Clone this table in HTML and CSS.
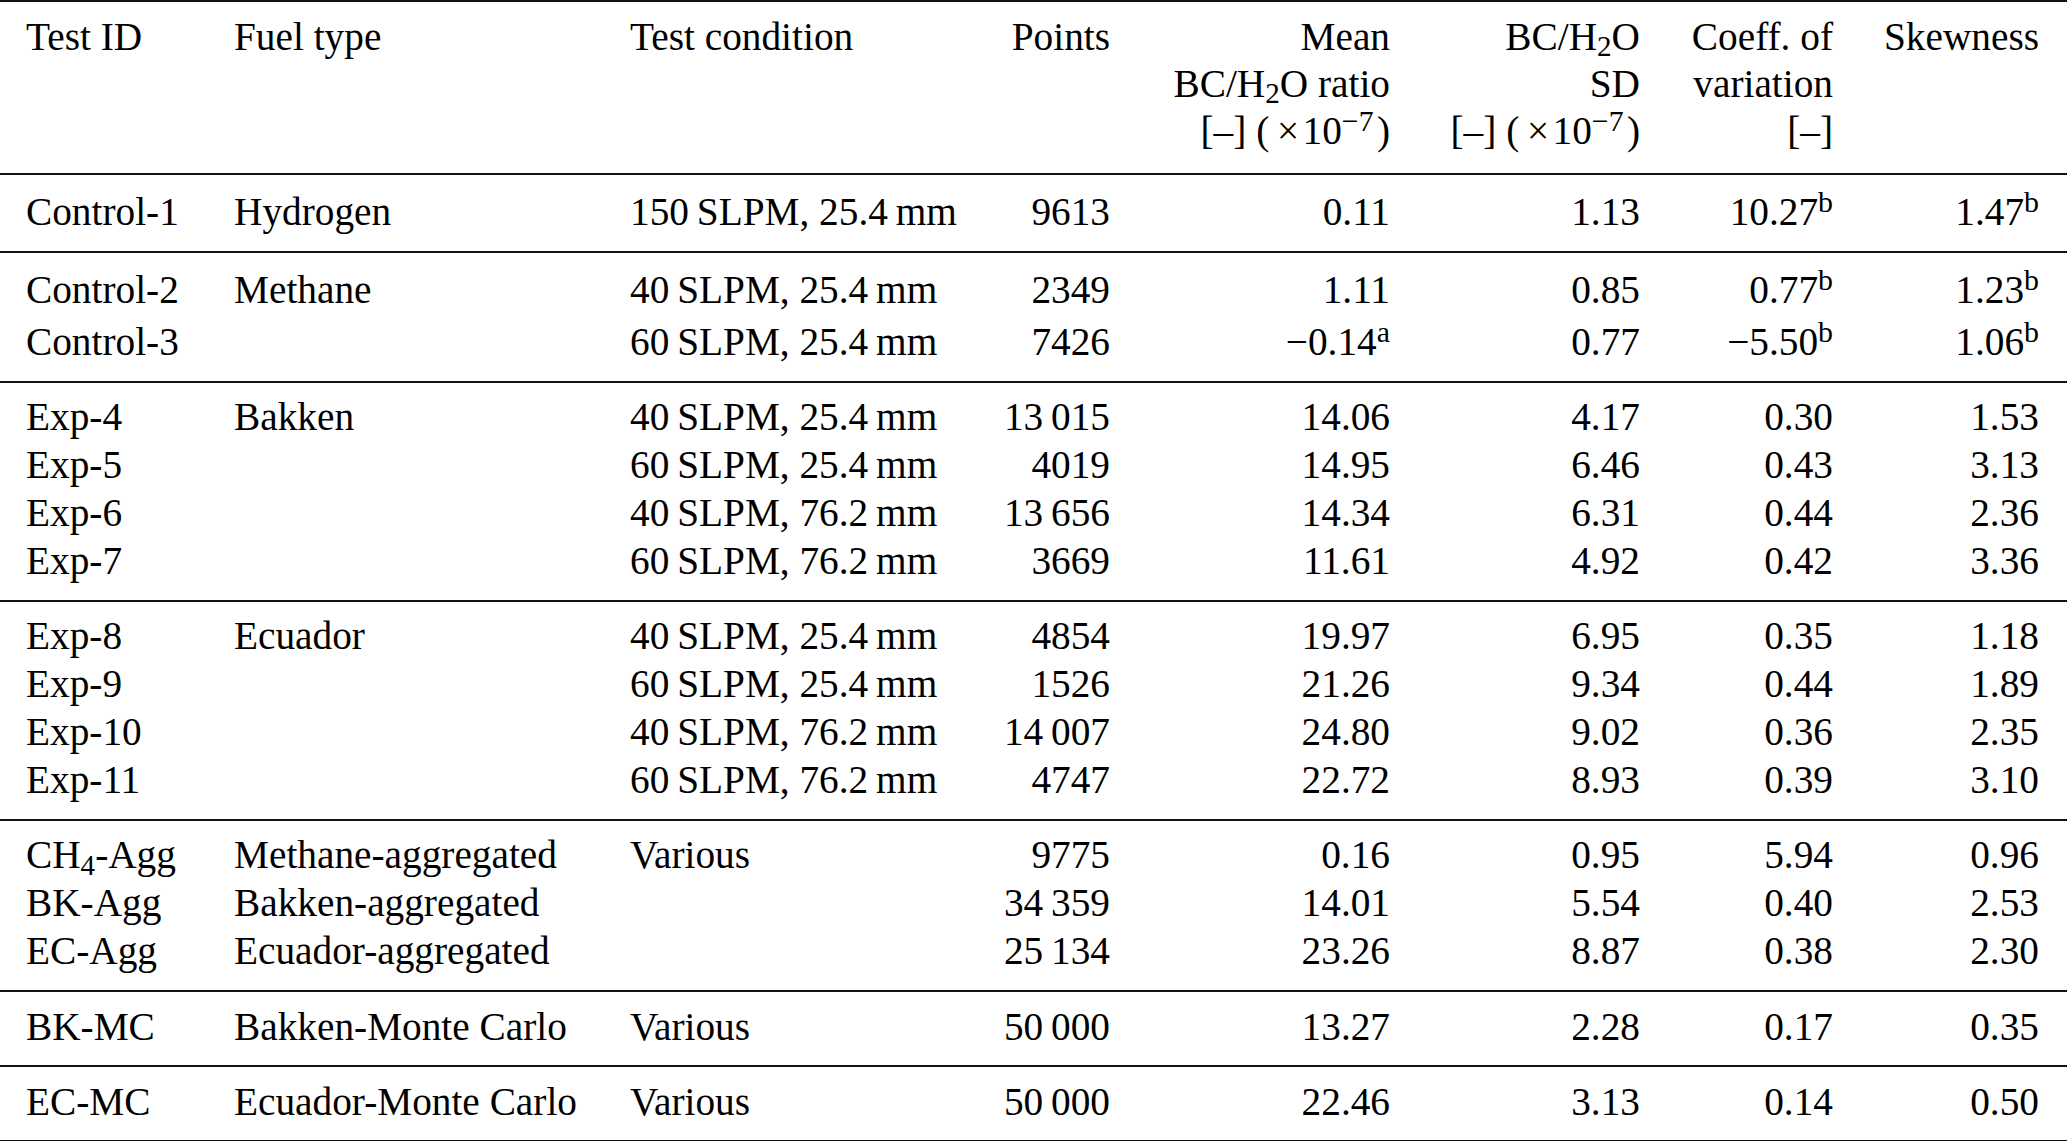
FILE: index.html
```html
<!DOCTYPE html>
<html lang="en">
<head>
<meta charset="utf-8">
<title>BC/H2O ratio statistics</title>
<link rel="stylesheet" href="styles.css">
</head>
<body>
<table class="t">
  <thead>
    <tr>
      <th>Test ID</th>
      <th>Fuel type</th>
      <th>Test condition</th>
      <th>Points</th>
      <th>Mean<br>BC/H<span class="sub">2</span>O ratio<br>[–] (&#8201;×&#8202;10<span class="sup">−7</span>&#8202;)</th>
      <th>BC/H<span class="sub">2</span>O<br>SD<br>[–] (&#8201;×&#8202;10<span class="sup">−7</span>&#8202;)</th>
      <th>Coeff. of<br>variation<br>[–]</th>
      <th>Skewness</th>
    </tr>
  </thead>
  <tbody>
    <tr class="hs"><td>Control-1</td><td>Hydrogen</td><td>150&#8201;SLPM, 25.4&#8201;mm</td><td>9613</td><td>0.11</td><td>1.13</td><td>10.27<span class="sup">b</span></td><td>1.47<span class="sup">b</span></td></tr>
  </tbody>
  <tbody>
    <tr class="hs"><td>Control-2</td><td>Methane</td><td>40&#8201;SLPM, 25.4&#8201;mm</td><td>2349</td><td>1.11</td><td>0.85</td><td>0.77<span class="sup">b</span></td><td>1.23<span class="sup">b</span></td></tr>
    <tr class="hs"><td>Control-3</td><td></td><td>60&#8201;SLPM, 25.4&#8201;mm</td><td>7426</td><td>−0.14<span class="sup">a</span></td><td>0.77</td><td>−5.50<span class="sup">b</span></td><td>1.06<span class="sup">b</span></td></tr>
  </tbody>
  <tbody>
    <tr><td>Exp-4</td><td>Bakken</td><td>40&#8201;SLPM, 25.4&#8201;mm</td><td>13&#8201;015</td><td>14.06</td><td>4.17</td><td>0.30</td><td>1.53</td></tr>
    <tr><td>Exp-5</td><td></td><td>60&#8201;SLPM, 25.4&#8201;mm</td><td>4019</td><td>14.95</td><td>6.46</td><td>0.43</td><td>3.13</td></tr>
    <tr><td>Exp-6</td><td></td><td>40&#8201;SLPM, 76.2&#8201;mm</td><td>13&#8201;656</td><td>14.34</td><td>6.31</td><td>0.44</td><td>2.36</td></tr>
    <tr><td>Exp-7</td><td></td><td>60&#8201;SLPM, 76.2&#8201;mm</td><td>3669</td><td>11.61</td><td>4.92</td><td>0.42</td><td>3.36</td></tr>
  </tbody>
  <tbody>
    <tr><td>Exp-8</td><td>Ecuador</td><td>40&#8201;SLPM, 25.4&#8201;mm</td><td>4854</td><td>19.97</td><td>6.95</td><td>0.35</td><td>1.18</td></tr>
    <tr><td>Exp-9</td><td></td><td>60&#8201;SLPM, 25.4&#8201;mm</td><td>1526</td><td>21.26</td><td>9.34</td><td>0.44</td><td>1.89</td></tr>
    <tr><td>Exp-10</td><td></td><td>40&#8201;SLPM, 76.2&#8201;mm</td><td>14&#8201;007</td><td>24.80</td><td>9.02</td><td>0.36</td><td>2.35</td></tr>
    <tr><td>Exp-11</td><td></td><td>60&#8201;SLPM, 76.2&#8201;mm</td><td>4747</td><td>22.72</td><td>8.93</td><td>0.39</td><td>3.10</td></tr>
  </tbody>
  <tbody>
    <tr><td>CH<span class="sub4">4</span>-Agg</td><td>Methane-aggregated</td><td>Various</td><td>9775</td><td>0.16</td><td>0.95</td><td>5.94</td><td>0.96</td></tr>
    <tr><td>BK-Agg</td><td>Bakken-aggregated</td><td></td><td>34&#8201;359</td><td>14.01</td><td>5.54</td><td>0.40</td><td>2.53</td></tr>
    <tr><td>EC-Agg</td><td>Ecuador-aggregated</td><td></td><td>25&#8201;134</td><td>23.26</td><td>8.87</td><td>0.38</td><td>2.30</td></tr>
  </tbody>
  <tbody class="mc">
    <tr><td>BK-MC</td><td>Bakken-Monte Carlo</td><td>Various</td><td>50&#8201;000</td><td>13.27</td><td>2.28</td><td>0.17</td><td>0.35</td></tr>
  </tbody>
  <tbody class="mc">
    <tr><td>EC-MC</td><td>Ecuador-Monte Carlo</td><td>Various</td><td>50&#8201;000</td><td>22.46</td><td>3.13</td><td>0.14</td><td>0.50</td></tr>
  </tbody>
</table>
</body>
</html>
```

FILE: styles.css
```css
html, body {
  margin: 0;
  padding: 0;
  background: #fff;
  overflow: hidden;
}

body {
  font-family: "Liberation Serif", "Times New Roman", serif;
  font-size: 39.3px;
  color: #000;
}

.t {
  border-collapse: collapse;
  table-layout: fixed;
  width: 2067px;
}

.t th,
.t td {
  box-sizing: border-box;
  padding: 0;
  font-weight: normal;
  text-align: left;
  vertical-align: top;
  white-space: nowrap;
  line-height: 48px;
}

.t th:nth-child(n+4),
.t td:nth-child(n+4) {
  text-align: right;
}

.t th:first-child,
.t td:first-child {
  padding-left: 26px;
}

.t th:last-child,
.t td:last-child {
  padding-right: 28px;
}

/* column widths */
.t th:nth-child(1) { width: 234px; }
.t th:nth-child(2) { width: 396px; }
.t th:nth-child(3) { width: 330px; }
.t th:nth-child(4) { width: 150px; }
.t th:nth-child(5) { width: 280px; }
.t th:nth-child(6) { width: 250px; }
.t th:nth-child(7) { width: 193px; }
.t th:nth-child(8) { width: 234px; }

.t thead {
  border-top: 2px solid #111;
}

.t th {
  line-height: 47px;
  padding-top: 12px;
  padding-bottom: 18px;
}

.t tbody {
  border-top: 2px solid #111;
}

.t tbody:last-child {
  border-bottom: 2px solid #111;
}

.t tbody tr:first-child td {
  padding-top: 10px;
}

.t tbody tr:last-child td {
  padding-bottom: 15px;
}

.t tbody.mc tr td {
  padding-top: 11px;
  padding-bottom: 14px;
}

.t tbody tr.hs td {
  padding-top: 4px;
}

.t tbody tr.hs:first-child td {
  padding-top: 13px;
}

.t tbody tr.hs:last-child td {
  padding-bottom: 15px;
}

.sup {
  font-size: 0.76em;
  line-height: 0;
  vertical-align: 0.44em;
}

.sub {
  font-size: 0.74em;
  line-height: 0;
  vertical-align: -0.2em;
}

.sub4 {
  font-size: 0.74em;
  line-height: 0;
  vertical-align: -0.24em;
}
```
